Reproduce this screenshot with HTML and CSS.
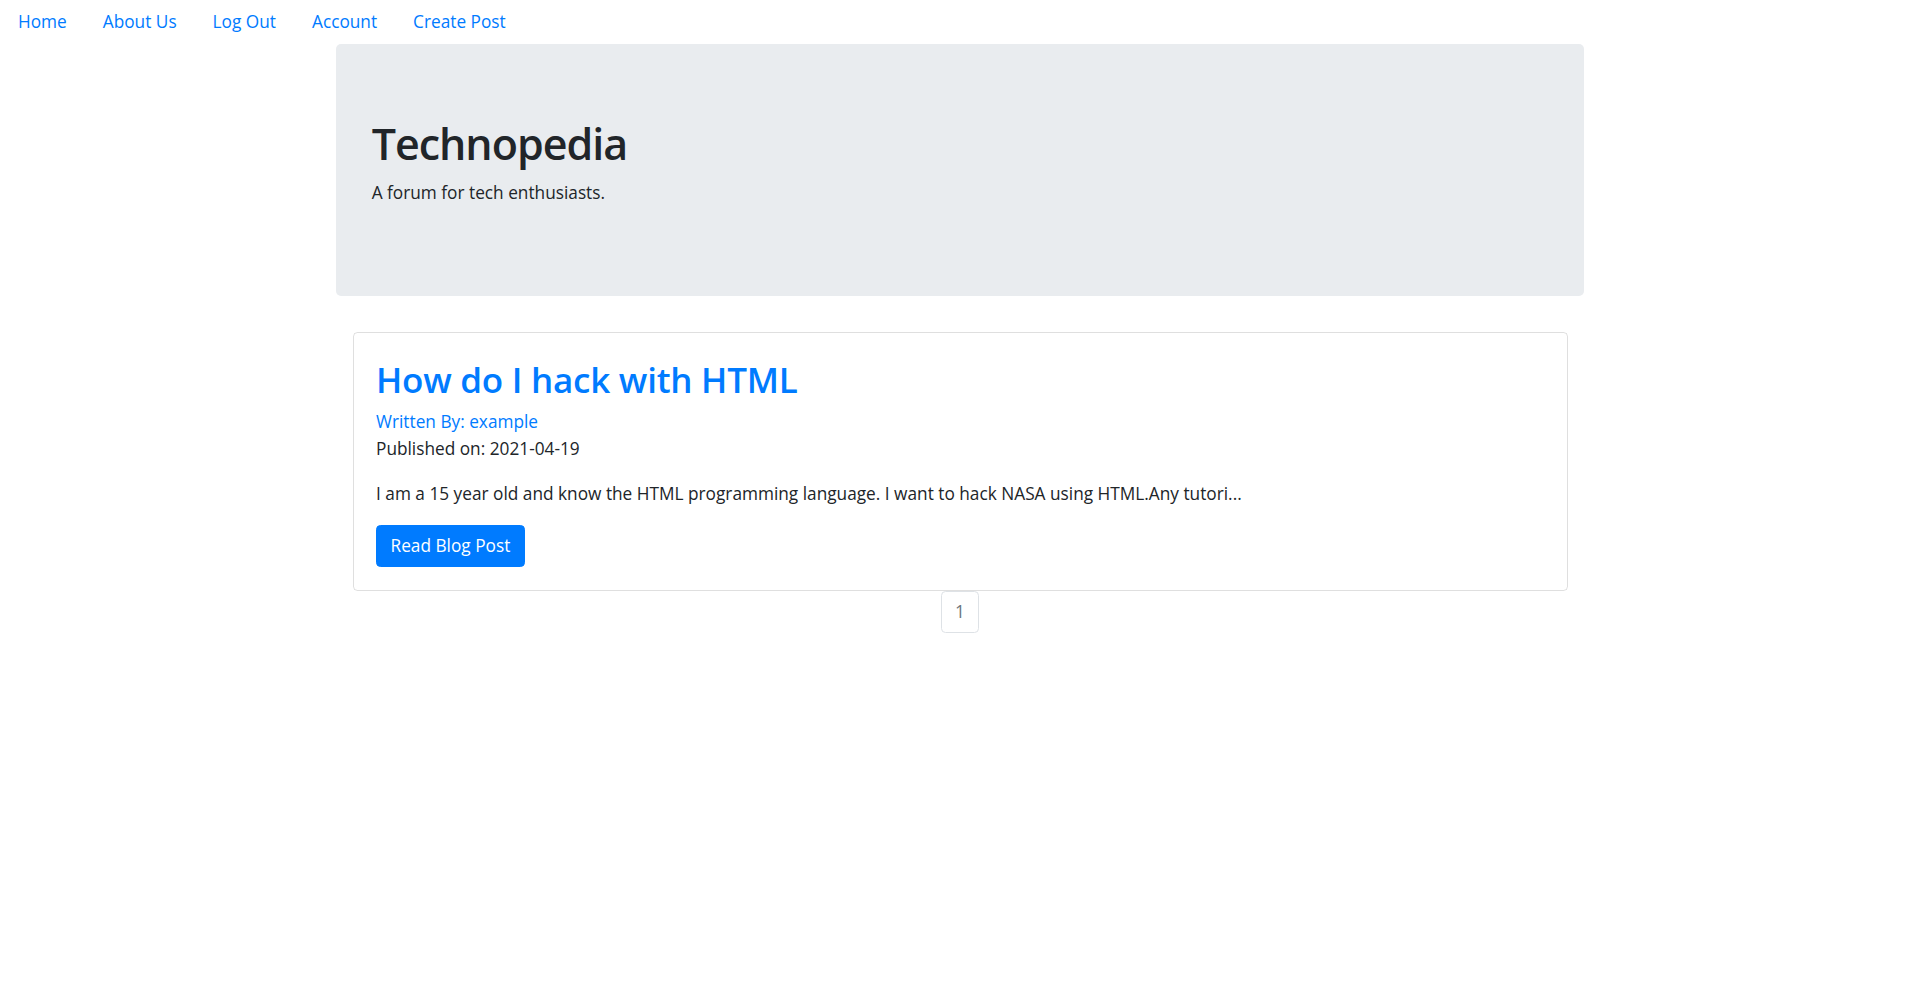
FILE: index.html
```html
<!DOCTYPE html>
<html lang="en">
<head>
<meta charset="utf-8">
<title>Technopedia</title>
<link rel="stylesheet" href="styles.css">
</head>
<body>
<nav class="topnav">
  <ul class="nav-list">
    <li><a class="nav-link" href="#">Home</a></li>
    <li><a class="nav-link" href="#">About Us</a></li>
    <li><a class="nav-link" href="#">Log Out</a></li>
    <li><a class="nav-link" href="#">Account</a></li>
    <li><a class="nav-link" href="#">Create Post</a></li>
  </ul>
</nav>
<div class="container">
  <div class="jumbotron">
    <h1 class="site-title">Technopedia</h1>
    <p class="lead-text">A forum for tech enthusiasts.</p>
  </div>
  <div class="posts">
    <div class="card">
      <div class="card-body">
        <h2 class="card-title"><a href="#">How do I hack with HTML</a></h2>
        <p class="meta"><a href="#">Written By: example</a><br>Published on: 2021-04-19</p>
        <p class="excerpt">I am a 15 year old and know the HTML programming language. I want to hack NASA using HTML.Any tutori...</p>
        <a class="btn" href="#">Read Blog Post</a>
      </div>
    </div>
    <ul class="pagination">
      <li class="page-item"><span class="page-link">1</span></li>
    </ul>
  </div>
</div>
</body>
</html>
```

FILE: styles.css
```css
* { box-sizing: border-box; }
html, body { margin: 0; padding: 0; }
body {
  font-family: "Open Sans", "Noto Sans", sans-serif;
  font-size: 17.25px;
  line-height: 27px;
  color: #212529;
  background: #fff;
}
a { color: #007bff; text-decoration: none; }

.topnav { height: 44px; }
.nav-list {
  list-style: none;
  margin: 0;
  padding: 0;
  display: flex;
}
.nav-link {
  display: block;
  padding: 8px 18px 9px;
}

.container {
  width: 1282.5px;
  margin: 0 auto;
  padding: 0 16.875px;
}
.jumbotron {
  background: #e9ecef;
  border-radius: 5px;
  padding: 73px 36px 72px;
  margin-bottom: 36px;
  height: 252px;
}
.site-title {
  margin: 0 0 8px;
  font-size: 43px;
  line-height: 54px;
  font-weight: 600;
  letter-spacing: -1px;
}
.lead-text { margin: 0; }

.posts { padding: 0 16.875px; }
.card {
  border: 1px solid rgba(0,0,0,.125);
  border-radius: 4.5px;
}
.card-body { padding: 22.5px; }
.card-title {
  margin: 0 0 7px;
  padding-top: 2px;
  font-size: 35px;
  line-height: 43px;
  font-weight: 600;
  letter-spacing: -0.25px;
}
.meta { margin: 0 0 18px; }
.excerpt { margin: 0 0 18px; }
.btn {
  display: inline-block;
  background: #007bff;
  color: #fff;
  border: 1px solid #007bff;
  border-radius: 4.5px;
  padding: 6.75px 13.5px;
  line-height: 27px;
}
.pagination {
  list-style: none;
  margin: 0;
  padding: 0;
  display: flex;
  justify-content: center;
}
.page-link {
  display: block;
  padding: 9px 13.5px;
  line-height: 22.5px;
  color: #6c757d;
  background: #fff;
  border: 1px solid #dee2e6;
  border-radius: 4.5px;
}
```
